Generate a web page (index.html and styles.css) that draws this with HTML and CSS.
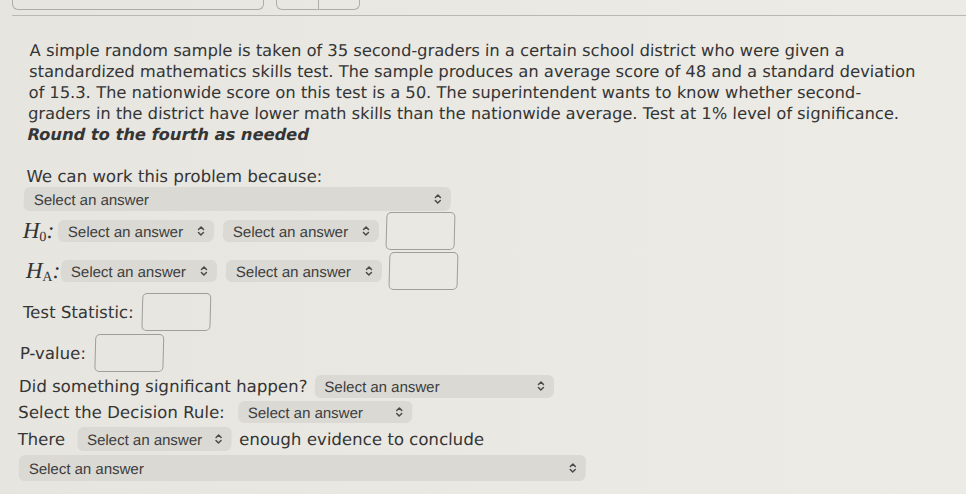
FILE: index.html
```html
<!DOCTYPE html>
<html>
<head>
<meta charset="utf-8">
<link rel="stylesheet" href="styles.css">
</head>
<body>
<div class="screen">
  <div class="topbar">
    <div class="tab tab-wide"></div>
    <div class="tab tab-split"><span></span><span></span></div>
  </div>
  <div class="content">
    <p class="question">A simple random sample is taken of 35 second-graders in a certain school district who were given a<br>standardized mathematics skills test. The sample produces an average score of 48 and a standard deviation<br>of 15.3. The nationwide score on this test is a 50. The superintendent wants to know whether second-<br>graders in the district have lower math skills than the nationwide average. Test at 1% level of significance.<br><em class="round">Round to the fourth as needed</em></p>

    <div class="label work">We can work this problem because:</div>
    <div class="select sel-full"><span>Select an answer</span><svg class="chev" viewBox="0 0 8 12" width="8" height="12"><path d="M1.5 4.5 L4 2 L6.5 4.5 M1.5 7.5 L4 10 L6.5 7.5"/></svg></div>

    <div class="row hyp h0">
      <span class="math">H<sub>0</sub>:</span>
      <div class="select sel-h"><span>Select an answer</span><svg class="chev" viewBox="0 0 8 12" width="8" height="12"><path d="M1.5 4.5 L4 2 L6.5 4.5 M1.5 7.5 L4 10 L6.5 7.5"/></svg></div>
      <div class="select sel-h"><span>Select an answer</span><svg class="chev" viewBox="0 0 8 12" width="8" height="12"><path d="M1.5 4.5 L4 2 L6.5 4.5 M1.5 7.5 L4 10 L6.5 7.5"/></svg></div>
      <div class="box"></div>
    </div>

    <div class="row hyp ha">
      <span class="math">H<sub>A</sub>:</span>
      <div class="select sel-h"><span>Select an answer</span><svg class="chev" viewBox="0 0 8 12" width="8" height="12"><path d="M1.5 4.5 L4 2 L6.5 4.5 M1.5 7.5 L4 10 L6.5 7.5"/></svg></div>
      <div class="select sel-h"><span>Select an answer</span><svg class="chev" viewBox="0 0 8 12" width="8" height="12"><path d="M1.5 4.5 L4 2 L6.5 4.5 M1.5 7.5 L4 10 L6.5 7.5"/></svg></div>
      <div class="box"></div>
    </div>

    <div class="row stat">
      <span class="label">Test Statistic:</span>
      <div class="box"></div>
    </div>

    <div class="row pval">
      <span class="label">P-value:</span>
      <div class="box"></div>
    </div>

    <div class="row srow did">
      <span class="label">Did something significant happen?</span>
      <div class="select sel-did"><span>Select an answer</span><svg class="chev" viewBox="0 0 8 12" width="8" height="12"><path d="M1.5 4.5 L4 2 L6.5 4.5 M1.5 7.5 L4 10 L6.5 7.5"/></svg></div>
    </div>

    <div class="row srow rule">
      <span class="label">Select the Decision Rule:</span>
      <div class="select sel-rule"><span>Select an answer</span><svg class="chev" viewBox="0 0 8 12" width="8" height="12"><path d="M1.5 4.5 L4 2 L6.5 4.5 M1.5 7.5 L4 10 L6.5 7.5"/></svg></div>
    </div>

    <div class="row srow there">
      <span class="label">There</span>
      <div class="select sel-there"><span>Select an answer</span><svg class="chev" viewBox="0 0 8 12" width="8" height="12"><path d="M1.5 4.5 L4 2 L6.5 4.5 M1.5 7.5 L4 10 L6.5 7.5"/></svg></div>
      <span class="label after">enough evidence to conclude</span>
    </div>

    <div class="select sel-last"><span>Select an answer</span><svg class="chev" viewBox="0 0 8 12" width="8" height="12"><path d="M1.5 4.5 L4 2 L6.5 4.5 M1.5 7.5 L4 10 L6.5 7.5"/></svg></div>
  </div>
</div>
</body>
</html>
```

FILE: styles.css
```css
html, body {
  margin: 0;
  padding: 0;
  background: #e8e7e2;
}
body {
  width: 966px;
  height: 494px;
  overflow: hidden;
  font-family: "DejaVu Sans", sans-serif;
  color: #353535;
}
.screen {
  background: linear-gradient(90deg, #e6e5e0 0%, #eae9e4 60%, #ecebe6 100%);
  height: 494px;
}
.topbar {
  height: 15px;
  border-bottom: 1px solid #b9b8b3;
  margin-left: 12px;
  display: flex;
  gap: 12px;
  align-items: flex-start;
}
.tab {
  height: 9px;
  border: 1px solid #aeada8;
  border-top: none;
  border-radius: 0 0 6px 6px;
}
.tab-wide { width: 250px; }
.tab-split {
  width: 82px;
  display: flex;
}
.tab-split span { flex: 1; }
.tab-split span:first-child { border-right: 1px solid #aeada8; }

.content {
  padding-left: 30px;
  transform: skewX(-1.5deg);
  transform-origin: 0 0;
}
.question {
  margin: 24px 0 0 0;
  font-size: 16.3px;
  line-height: 21px;
  white-space: nowrap;
}
.round {
  font-style: italic;
  font-weight: bold;
}
.label {
  font-size: 16.6px;
  line-height: 21px;
  white-space: nowrap;
}
.work {
  margin-top: 21px;
}
.select {
  display: flex;
  align-items: center;
  justify-content: space-between;
  box-sizing: border-box;
  height: 23px;
  padding: 0 9px 0 10px;
  background: #dad9d4;
  border-radius: 6px;
  font-family: "Liberation Sans", Arial, sans-serif;
  font-size: 15px;
  color: #3d3d3d;
  flex: none;
}
.chev {
  fill: none;
  stroke: #4a4a4a;
  stroke-width: 1.5;
  stroke-linecap: round;
  stroke-linejoin: round;
}
.sel-full {
  width: 427px;
  height: 24px;
  margin-left: -2px;
}
.row {
  display: flex;
  align-items: center;
}
.hyp {
  height: 40px;
}
.h0 { margin-left: -2px; }
.ha { margin-left: 2px; }
.hyp .sel-h {
  width: 156px;
  height: 22px;
  margin-right: 9px;
}
.hyp .sel-h + .sel-h {
  margin-right: 7px;
}
.math {
  font-family: "Liberation Serif", "DejaVu Serif", serif;
  font-style: italic;
  font-size: 23px;
  color: #333;
  width: 35px;
  flex: none;
}
.math sub {
  font-style: normal;
  font-size: 14px;
  vertical-align: -3px;
}
.box {
  width: 69px;
  height: 38px;
  border: 1.5px solid #9f9e99;
  border-radius: 5px;
  box-sizing: border-box;
  flex: none;
}
.stat {
  height: 42px;
  margin-left: 0px;
  gap: 8px;
}
.pval {
  height: 40px;
  margin-left: -2px;
  gap: 9px;
}
.srow {
  height: 26px;
  margin-left: -2px;
  gap: 7px;
}
.sel-did { width: 239px; }
.rule { gap: 13px; }
.sel-rule { width: 174px; height: 22px; }
.there {
  height: 28px;
  gap: 12px;
}
.there .after { margin-left: -4px; }
.sel-there { width: 154px; height: 24px; }
.sel-last {
  width: 567px;
  height: 26px;
  margin-top: 2px;
  margin-left: 0px;
}
```
